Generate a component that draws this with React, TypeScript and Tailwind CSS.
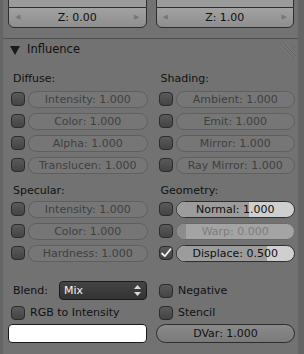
import React from "react";

// Disabled slider row (greyed out field beside a checkbox)
function Check({ checked = false }: { checked?: boolean }) {
  return (
    <div className="w-[14px] h-[14px] shrink-0 rounded-[4px] border border-[#2c2c2c] bg-gradient-to-b from-[#5a5a5a] to-[#444444] flex items-center justify-center">
      {checked && (
        <svg width="12" height="12" viewBox="0 0 12 12">
          <path d="M2 6.5 L4.8 9.2 L10.5 2.2" fill="none" stroke="#f4f4f4" strokeWidth="1.8" strokeLinecap="round" strokeLinejoin="round" />
        </svg>
      )}
    </div>
  );
}

function DimRow({ label }: { label: string }) {
  return (
    <div className="h-[22px] flex items-center gap-[3px]">
      <Check />
      <div className="flex-1 h-[17px] rounded-full border border-[#5f5f5f] bg-[#767676] flex items-center justify-center text-[#404040]">
        {label}
      </div>
    </div>
  );
}

function SliderRow({ label, fill, checked = false, dim = false }: { label: string; fill: number; checked?: boolean; dim?: boolean }) {
  return (
    <div className="h-[22px] flex items-center gap-[3px]">
      <Check checked={checked} />
      <div
        className={`relative flex-1 h-[17px] rounded-full overflow-hidden border ${dim ? "border-[#6a6a6a] bg-[#a4a4a4] text-[#7c7c7c]" : "border-[#2e2e2e] bg-[#cfcfcf] text-[#0e0e0e]"}`}
      >
        <div
          className={`absolute left-0 top-0 bottom-0 ${dim ? "bg-[#8c8c8c]" : "bg-[#9c9c9c]"}`}
          style={{ width: `${fill}%` }}
        />
        <div className="relative h-full flex items-center justify-center">{label}</div>
      </div>
    </div>
  );
}

function ZField({ label }: { label: string }) {
  return (
    <div className="flex-1 flex flex-col">
      <div className="h-[7px] border-x border-[#2e2e2e] bg-[#9b9b9b]" />
      <div className="h-[21px] border border-[#2e2e2e] rounded-b-[6px] bg-gradient-to-b from-[#a2a2a2] to-[#8e8e8e] flex items-center px-[6px] text-[#101010]">
        <span className="text-[7px] text-[#777]">◀</span>
        <span className="flex-1 text-center">{label}</span>
        <span className="text-[7px] text-[#777]">▶</span>
      </div>
    </div>
  );
}

export default function App() {
  return (
    <div
      className="w-[304px] h-[354px] overflow-hidden bg-[#727272] border-l-[3px] border-r-[6px] border-[#656565] text-[11px] leading-none text-[#111]"
      style={{ fontFamily: '"DejaVu Sans", sans-serif' }}
    >
      {/* Z fields */}
      <div className="flex gap-[9px] pl-[5px] pr-[4px]">
        <ZField label="Z: 0.00" />
        <ZField label="Z: 1.00" />
      </div>

      {/* Influence header */}
      <div className="mt-[10px] border-t border-[#505050]" />
      <div className="h-[22px] flex items-center pl-[7px] pr-[2px]">
        <svg width="10" height="9" viewBox="0 0 10 9" className="mr-[7px]">
          <path d="M0 0 H10 L5 9 Z" fill="#1a1a1a" />
        </svg>
        <span className="text-[11.5px] text-[#111] flex-1">Influence</span>
        <svg width="14" height="15" viewBox="0 0 14 15">
          <path d="M4 0 L14 10 M1 1 L14 14 M0 4 L10 14 M7 0 L14 7" stroke="#8a8a8a" strokeWidth="1" fill="none" />
          <path d="M4.7 0 L14 9.3 M1.7 1 L14 13.3 M0.7 4 L10.7 14 M7.7 0 L14 6.3" stroke="#555" strokeWidth="0.7" fill="none" />
        </svg>
      </div>

      {/* Two columns */}
      <div className="grid grid-cols-2 gap-[11px] pl-[8px] pr-[3px] mt-[1px]">
        <div>
          <div className="h-[26px] flex items-center pl-[2px] pt-[6px]">Diffuse:</div>
          <DimRow label="Intensity: 1.000" />
          <DimRow label="Color: 1.000" />
          <DimRow label="Alpha: 1.000" />
          <DimRow label="Translucen: 1.000" />
          <div className="h-[22px] flex items-center pl-[2px] pt-[7px]">Specular:</div>
          <DimRow label="Intensity: 1.000" />
          <DimRow label="Color: 1.000" />
          <DimRow label="Hardness: 1.000" />
        </div>
        <div>
          <div className="h-[26px] flex items-center pl-[2px] pt-[6px]">Shading:</div>
          <DimRow label="Ambient: 1.000" />
          <DimRow label="Emit: 1.000" />
          <DimRow label="Mirror: 1.000" />
          <DimRow label="Ray Mirror: 1.000" />
          <div className="h-[22px] flex items-center pl-[2px] pt-[7px]">Geometry:</div>
          <SliderRow label="Normal: 1.000" fill={62} />
          <SliderRow label="Warp: 0.000" fill={8} dim />
          <SliderRow label="Displace: 0.500" fill={77} checked />
        </div>
      </div>

      {/* Bottom options */}
      <div className="grid grid-cols-2 gap-[9px] pl-[5px] pr-[3px] mt-[16px]">
        <div>
          <div className="h-[21px] flex items-center pl-[5px]">
            <span className="w-[46px]">Blend:</span>
            <div className="flex-1 h-[19px] rounded-[4px] border border-[#1c1c1c] bg-gradient-to-b from-[#444] to-[#333] flex items-center pl-[4px] pr-[5px] text-[#f2f2f2]">
              <span className="flex-1">Mix</span>
              <svg width="7" height="11" viewBox="0 0 7 11">
                <path d="M3.5 0 L7 4 H0 Z M0 7 H7 L3.5 11 Z" fill="#d8d8d8" />
              </svg>
            </div>
          </div>
          <div className="h-[23px] flex items-center gap-[5px] pl-[3px]">
            <Check />
            <span>RGB to Intensity</span>
          </div>
          <div className="h-[19px] rounded-[4px] border border-[#1a1a1a] bg-white" />
        </div>
        <div>
          <div className="h-[21px] flex items-center gap-[5px] pl-[3px]">
            <Check />
            <span>Negative</span>
          </div>
          <div className="h-[23px] flex items-center gap-[5px] pl-[3px]">
            <Check />
            <span>Stencil</span>
          </div>
          <div className="h-[19px] rounded-full border border-[#2e2e2e] bg-gradient-to-b from-[#8a8a8a] to-[#7a7a7a] flex items-center justify-center">
            DVar: 1.000
          </div>
        </div>
      </div>
    </div>
  );
}
